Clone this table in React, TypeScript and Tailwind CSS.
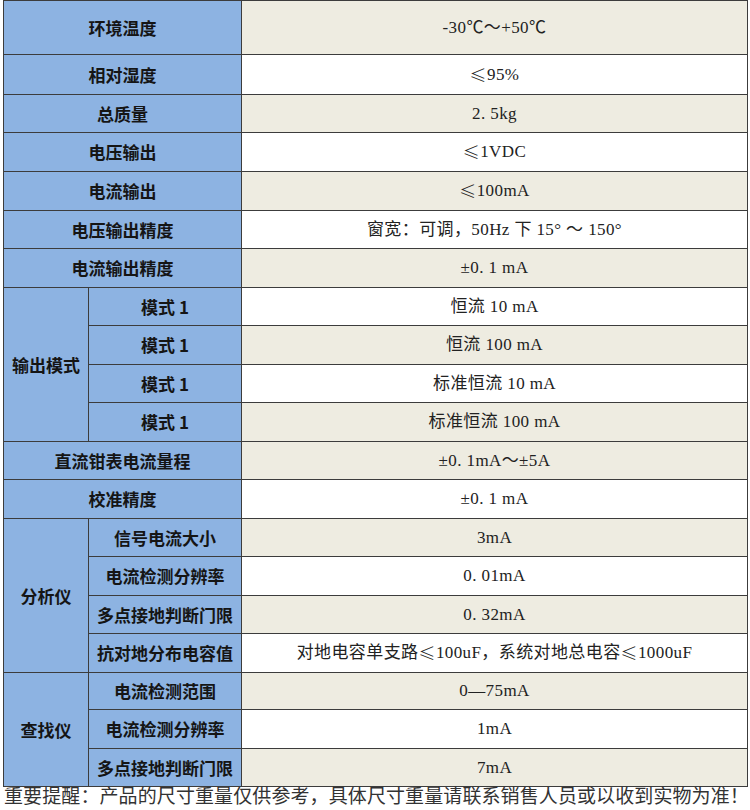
import React from "react";

type Row = { label?: string; sub?: string; value: string; bg: "b" | "w" };

const rows: Row[] = [
  { label: "环境温度", value: "-30℃～+50℃", bg: "b" },
  { label: "相对湿度", value: "≤95%", bg: "w" },
  { label: "总质量", value: "2. 5kg", bg: "b" },
  { label: "电压输出", value: "≤1VDC", bg: "w" },
  { label: "电流输出", value: "≤100mA", bg: "b" },
  { label: "电压输出精度", value: "窗宽：可调，50Hz 下 15° ～ 150°", bg: "w" },
  { label: "电流输出精度", value: "±0. 1 mA", bg: "b" },
  { sub: "模式 1", value: "恒流 10 mA", bg: "w" },
  { sub: "模式 1", value: "恒流 100 mA", bg: "b" },
  { sub: "模式 1", value: "标准恒流 10 mA", bg: "w" },
  { sub: "模式 1", value: "标准恒流 100 mA", bg: "b" },
  { label: "直流钳表电流量程", value: "±0. 1mA～±5A", bg: "b" },
  { label: "校准精度", value: "±0. 1 mA", bg: "w" },
  { sub: "信号电流大小", value: "3mA", bg: "b" },
  { sub: "电流检测分辨率", value: "0. 01mA", bg: "w" },
  { sub: "多点接地判断门限", value: "0. 32mA", bg: "b" },
  { sub: "抗对地分布电容值", value: "对地电容单支路≤100uF，系统对地总电容≤1000uF", bg: "w" },
  { sub: "电流检测范围", value: "0—75mA", bg: "b" },
  { sub: "电流检测分辨率", value: "1mA", bg: "w" },
  { sub: "多点接地判断门限", value: "7mA", bg: "b" },
];

const groups: { [k: number]: { name: string; span: string } } = {
  7: { name: "输出模式", span: "row-span-4" },
  13: { name: "分析仪", span: "row-span-4" },
  17: { name: "查找仪", span: "row-span-3" },
};

const labelCls =
  "bg-[#8db3e2] flex items-center justify-center text-[17px] font-bold text-[#151515] whitespace-nowrap font-['Noto_Sans_CJK_SC','Noto_Sans',sans-serif]";

function renderValue(v: string) {
  const parts = v.split("≤");
  return parts.map((p, i) => (
    <React.Fragment key={i}>
      {i > 0 && <span className="font-['Noto_Sans_CJK_SC',sans-serif] font-light">≤</span>}
      {p}
    </React.Fragment>
  ));
}

export default function App() {
  const cells: React.ReactNode[] = [];
  rows.forEach((r, i) => {
    const g = groups[i];
    if (g) {
      cells.push(
        <div key={"g" + i} className={`${g.span} ${labelCls}`}>
          {g.name}
        </div>
      );
    }
    if (r.label) {
      cells.push(
        <div key={"l" + i} className={`col-span-2 ${labelCls}`}>
          {r.label}
        </div>
      );
    } else {
      cells.push(
        <div key={"s" + i} className={`col-start-2 ${labelCls}`}>
          {r.sub}
        </div>
      );
    }
    cells.push(
      <div
        key={"v" + i}
        className={`col-start-3 flex items-center justify-center text-[17px] tracking-[0.4px] text-[#222] whitespace-pre font-['Liberation_Serif','Noto_Sans_CJK_SC',serif] ${
          r.bg === "b" ? "bg-[#eeece1]" : "bg-white"
        }`}
      >
        {renderValue(r.value)}
      </div>
    );
  });

  return (
    <div className="w-[750px] h-[810px] bg-white overflow-hidden">
      <div className="ml-[3px] w-[745px] grid grid-cols-[84px_152px_505px] grid-rows-[53px_39px_37px_38px_38px_37px_38px_37px_38px_37px_38px_37px_38px_37px_38px_37px_38px_36px_38px_37px] gap-px p-px bg-[#3c3c3c]">
        {cells}
      </div>
      <div className="pl-[4px] text-[19px] leading-[20px] text-[#333] whitespace-nowrap tracking-[0.1px] font-['Liberation_Serif','Noto_Sans_CJK_SC',serif]">
        重要提醒：产品的尺寸重量仅供参考，具体尺寸重量请联系销售人员或以收到实物为准！
      </div>
    </div>
  );
}
